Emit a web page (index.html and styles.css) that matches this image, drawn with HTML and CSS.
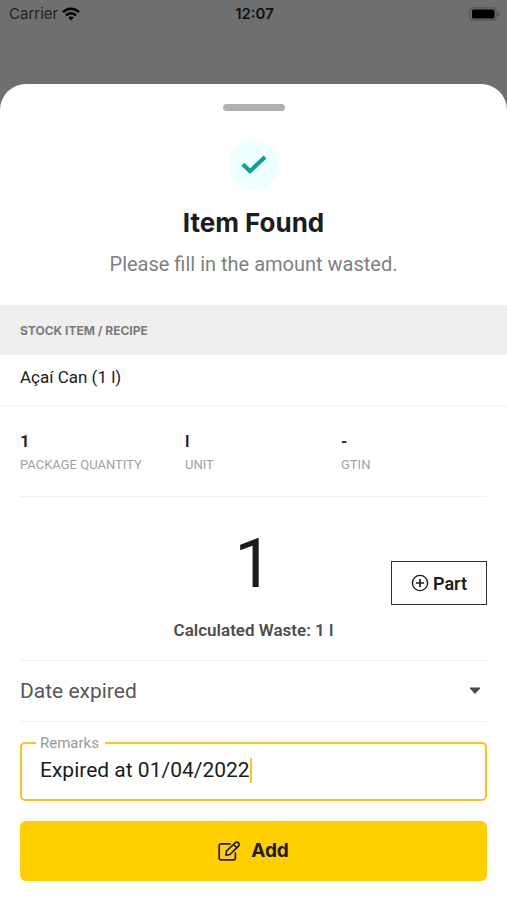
FILE: index.html
```html
<!DOCTYPE html>
<html lang="en">
<head>
<meta charset="utf-8">
<meta name="viewport" content="width=device-width, initial-scale=1">
<title>Item Found</title>
<link rel="stylesheet" href="styles.css">
</head>
<body>
<header class="status">
  <span class="carrier">Carrier
    <svg width="18" height="14" viewBox="0 0 18 14" fill="none" stroke="#000" stroke-width="2.4" aria-hidden="true"><path d="M1 5.2C5.4.6 12.6.6 17 5.2M4 8.4c2.8-2.9 7.2-2.9 10 0"/><path d="M6.2 10.6c1.6-1.5 4-1.5 5.6 0L9 13.6z" fill="#000" stroke="none"/></svg>
  </span>
  <time class="clock">12:07</time>
  <svg class="battery" width="31" height="14" viewBox="0 0 31 14" aria-hidden="true"><rect x=".8" y=".8" width="26.4" height="12.4" rx="3.4" fill="none" stroke="#555" stroke-width="1.2"/><rect x="3" y="2.5" width="22.5" height="9" rx="1.6"/><path d="M28.5 4.5q2 .8 2 2.5t-2 2.5z" fill="#555"/></svg>
</header>
<main class="sheet">
  <div class="handle"></div>
  <section class="intro">
    <span class="badge"><svg width="26" height="20" viewBox="0 0 26 20" fill="none" stroke="#0ba39a" stroke-width="4.2" stroke-linejoin="miter" aria-hidden="true"><path d="M1.800 9.200 9 16.200 24 2"/></svg></span>
    <h1>Item Found</h1>
    <p>Please fill in the amount wasted.</p>
  </section>
  <h2 class="band">STOCK ITEM / RECIPE</h2>
  <p class="item">Açaí Can (1 l)</p>
  <div class="content">
    <dl class="facts">
      <div><dt>PACKAGE QUANTITY</dt><dd>1</dd></div>
      <div><dt>UNIT</dt><dd>l</dd></div>
      <div><dt>GTIN</dt><dd>-</dd></div>
    </dl>
    <section class="amount">
      <input class="quantity" type="text" inputmode="decimal" aria-label="Amount" value="1">
      <button class="part" type="button"><svg width="18" height="18" viewBox="0 0 18 18" fill="none" stroke="currentColor" stroke-width="1.4" aria-hidden="true"><circle cx="9" cy="9" r="7.6"/><path d="M9 5v8M5 9h8" stroke-width="1.7"/></svg>Part</button>
      <p class="waste">Calculated Waste: 1 l</p>
    </section>
    <div class="reason">
      <select aria-label="Reason"><option>Date expired</option></select>
      <svg width="12" height="8" viewBox="0 0 12 8" fill="#484848" stroke="#484848" stroke-linejoin="round" aria-hidden="true"><path d="M1 1h10L6 6.5z"/></svg>
    </div>
    <fieldset class="remarks">
      <legend><label for="remarks">Remarks</label></legend>
      <div class="entry"><input id="remarks" type="text" value="Expired at 01/04/2022"><span class="caret"></span></div>
    </fieldset>
    <button class="add" type="button"><svg width="23" height="21" viewBox="0 0 23 21" fill="none" stroke="currentColor" stroke-width="1.7" stroke-linejoin="round" stroke-linecap="round" aria-hidden="true"><path d="M12 2.8H3A1.8 1.8 0 0 0 1.200 4.600V17A1.800 1.800 0 0 0 3 18.800H15.600A1.800 1.800 0 0 0 17.400 17V12"/><path d="M8 14.200 8.500 10 17.200 1.900a2.300 2.300 0 0 1 3.300 3.300L12 13.500zM15.500 3.500l3.400 3.300"/></svg>Add</button>
  </div>
</main>
</body>
</html>
```
FILE: styles.css
```css
* { box-sizing: border-box; }
body {
  margin: 0;
  min-height: 100vh;
  display: flex;
  flex-direction: column;
  background: #6f6f6f;
  color: #1c1c1c;
  font-family: Roboto, "Liberation Sans", sans-serif;
}
h1, h2, p, dl, dd { margin: 0; }
button, input, select { font: inherit; color: inherit; }
svg { display: block; flex: none; }

.status {
  display: grid;
  grid-template-columns: 1fr auto 1fr;
  align-items: center;
  height: 28px;
  margin-bottom: 56px;
  padding: 0 7px 0 9px;
  font: 15px/20px Inter, sans-serif;
}
.carrier { display: flex; align-items: center; gap: 4px; color: #222; }
.clock { font-weight: 600; color: #111; }
.battery { justify-self: end; }

.sheet {
  flex: 1;
  padding-top: 20px;
  background: #fff;
  border-radius: 26px 26px 0 0;
}
.handle {
  width: 62px;
  height: 7px;
  margin: 0 auto 29px;
  border-radius: 4px;
  background: #b0b0b0;
}
.intro {
  display: flex;
  flex-direction: column;
  align-items: center;
  padding-bottom: 28px;
  text-align: center;
}
.badge {
  display: grid;
  place-items: center;
  width: 50px;
  height: 50px;
  border-radius: 50%;
  background: #edfffe;
}
.intro h1 {
  margin: 16px 0 11px;
  font: 700 26px/34px Inter, sans-serif;
}
.intro p { color: #7f7f7f; font-size: 20px; line-height: 26px; }

.band {
  padding: 1px 20px 0;
  background: #efefef;
  color: #7c7c7c;
  font: 700 12px/49px Inter, sans-serif;
}
.item {
  padding: 10px 20px 16px;
  border-bottom: 1px solid #efefef;
  font-size: 17px;
  line-height: 24px;
}
.content { padding: 0 20px 20px; }
.facts {
  display: grid;
  grid-template-columns: 165px 156px 1fr;
  padding: 23px 0 19px;
  border-bottom: 1px solid #efefef;
}
.facts div { display: flex; flex-direction: column-reverse; }
.facts dt { color: #a2a2a2; font-size: 13px; line-height: 24px; }
.facts dd { font-size: 17px; font-weight: 600; line-height: 24px; }

.amount {
  display: grid;
  grid-template-columns: 96px 1fr 96px;
  align-items: end;
  padding: 28px 0 18px;
  border-bottom: 1px solid #efefef;
}
.quantity {
  grid-column: 2;
  width: 100%;
  height: 80px;
  padding: 0 0 2px;
  border: 0;
  background: none;
  font-size: 68px;
  text-align: center;
}
.part {
  display: flex;
  align-items: center;
  justify-content: center;
  gap: 4px;
  height: 44px;
  padding: 0;
  border: 1px solid #333;
  background: #fff;
  font-size: 18px;
  font-weight: 600;
}
.waste {
  grid-column: 1 / -1;
  margin-top: 13px;
  color: #4e4e4e;
  font-size: 17px;
  font-weight: 600;
  line-height: 24px;
  text-align: center;
}
.reason {
  display: grid;
  align-items: center;
  border-bottom: 1px solid #efefef;
}
.reason > * { grid-area: 1 / 1; }
.reason select {
  appearance: none;
  width: 100%;
  height: 60px;
  padding: 0;
  border: 0;
  background: none;
  color: #575757;
  font-size: 21px;
}
.reason svg { justify-self: end; margin-right: 6px; pointer-events: none; }

.remarks {
  min-width: 0;
  margin: 11px 0 20px;
  padding: 0 18px 12px;
  border: 2px solid #f8c51c;
  border-radius: 5px;
}
.remarks legend {
  margin-left: -4px;
  padding: 0 6px 0 4px;
  color: #9a9a9a;
  font-size: 15px;
  line-height: 20px;
}
.entry { display: flex; align-items: center; height: 34px; }
.entry input {
  field-sizing: content;
  max-width: 100%;
  padding: 0;
  border: 0;
  outline: 0;
  background: none;
  font-size: 21px;
}
.caret { width: 2px; height: 25px; background: #f8c51c; }

.add {
  display: flex;
  align-items: center;
  justify-content: center;
  gap: 10px;
  width: 100%;
  height: 60px;
  padding: 0;
  border: 0;
  border-radius: 6px;
  background: #ffcf00;
  font: 700 19px/24px Inter, sans-serif;
}
```
